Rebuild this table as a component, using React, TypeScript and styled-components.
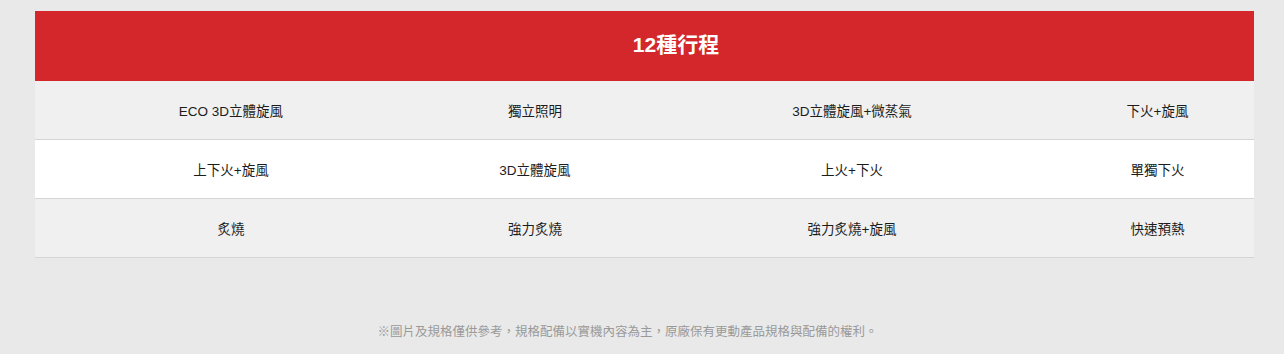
import React from 'react';
import styled, { createGlobalStyle } from 'styled-components';

const programs: string[][] = [
  ['ECO 3D立體旋風', '獨立照明', '3D立體旋風+微蒸氣', '下火+旋風'],
  ['上下火+旋風', '3D立體旋風', '上火+下火', '單獨下火'],
  ['炙燒', '強力炙燒', '強力炙燒+旋風', '快速預熱'],
];

export default function App(): JSX.Element {
  return (
    <Page>
      <GlobalStyle />
      <SpecTable>
        <TableHead>
          <Title>12種行程</Title>
        </TableHead>
        {programs.map((row, i) => (
          <Row key={i} striped={i % 2 === 0}>
            {row.map((name) => (
              <Cell key={name}>{name}</Cell>
            ))}
          </Row>
        ))}
      </SpecTable>
      <Note>※圖片及規格僅供參考，規格配備以實機內容為主，原廠保有更動產品規格與配備的權利。</Note>
    </Page>
  );
}

const GlobalStyle = createGlobalStyle`
  html, body {
    margin: 0;
    background: #e9e9e9;
    font-family: "Liberation Sans", "Noto Sans CJK TC", Arial, sans-serif;
  }
`;

const Page = styled.div`
  padding: 11px 30px 0 35px;
  min-height: 354px;
  box-sizing: border-box;
`;

const SpecTable = styled.div`
  display: flex;
  flex-direction: column;
`;

const TableHead = styled.div`
  height: 70px;
  background: #d4272b;
  display: flex;
  align-items: center;
  justify-content: center;
  padding: 0 0 3px 63px;
  box-sizing: border-box;
`;

const Title = styled.h2`
  margin: 0;
  color: #fff;
  font-size: 21px;
  font-weight: 700;
  line-height: 1;
`;

const Row = styled.div<{ striped: boolean }>`
  display: grid;
  grid-template-columns: 392fr 216fr 418fr 193fr;
  height: 58px;
  border-bottom: 1px solid #d5d5d5;
  background: ${({ striped }) => (striped ? '#f0f0f0' : '#ffffff')};
`;

const Cell = styled.div`
  display: flex;
  align-items: center;
  justify-content: center;
  padding-bottom: 1px;
  font-size: 13.5px;
  color: #1c1c1c;
`;

const Note = styled.p`
  margin: 64px 0 0;
  padding-right: 34px;
  text-align: center;
  font-size: 12.5px;
  line-height: 20px;
  color: #999;
`;
